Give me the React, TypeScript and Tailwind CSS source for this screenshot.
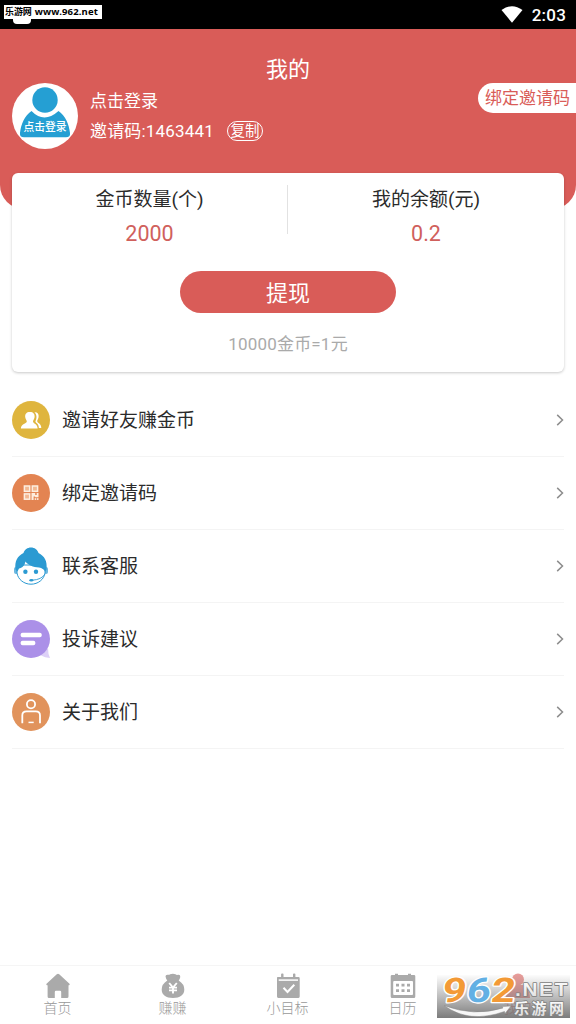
import type { ReactNode } from "react";

const AvatarIcon = () => (
  <svg viewBox="0 0 66 66" className="block size-[66px]">
    <circle cx="33" cy="33" r="33" fill="#fff" />
    <circle cx="33" cy="17" r="12.7" fill="#259fd3" />
    <path d="M19.5 28 Q32 41 46.5 28 C53.5 33 57 41 58 50 Q58.5 54.3 54 54.3 H12 Q7.500 54.3 8 50 C9 41 12.500 33 19.5 28Z" fill="#259fd3" />
  </svg>
);

const FriendsIcon = () => (
  <svg viewBox="0 0 38 38" className="size-[38px] shrink-0">
    <circle cx="19" cy="19" r="19" fill="#dfb53e" />
    <path d="M22.500 11.200 C25.500 11 27 13 26.600 16 C26.400 18 25.200 19 25.200 20.200 C25.200 22 29.300 22.300 29.300 27 H26.900 C26.900 22.500 23.400 22 23.400 20.300 C25 17.500 25 13.500 22.500 11.200Z" fill="#fff" />
    <path d="M17.900 11 C21.400 11 22.800 13 22.600 16 C22.500 18 21 19 21 20.500 C21 22.700 25.600 22.600 25.600 27.500 H8.900 C8.900 22.600 14.800 22.700 14.800 20.500 C14.800 19 13.300 18 13.200 16 C13 13 14.400 11 17.900 11Z" fill="#fff" />
  </svg>
);

const CodeIcon = () => (
  <svg viewBox="0 0 38 38" className="size-[38px] shrink-0">
    <circle cx="19" cy="19" r="19" fill="#e38452" />
    <g fill="#f2b892" stroke="#fdeee0" strokeWidth="1.500">
      <rect x="12.400" y="12" width="5.300" height="5.300" />
      <rect x="20.300" y="12" width="5.300" height="5.300" />
      <rect x="12.400" y="19.900" width="5.300" height="5.300" />
    </g>
    <g fill="#fdeee0">
      <path d="M19.500 19.100h3.700v1.800h1.500v-1.800h1.800v4.200h-3.400v-.8h-1.500v3.500h-2.100z" />
      <rect x="22.700" y="24.200" width="1.600" height="1.700" />
      <rect x="25" y="24.200" width="1.500" height="1.700" />
    </g>
  </svg>
);

const SupportIcon = () => (
  <svg viewBox="0 0 38 38" className="size-[38px] shrink-0">
    <rect x="2" y="20" width="4" height="7" rx="2" fill="#6cb8e0" />
    <rect x="32" y="20" width="4" height="7" rx="2" fill="#6cb8e0" />
    <path d="M5 18 V26 C6 32.500 12 37.200 19 37.200 S32 32.500 33 26 V18 Z" fill="#fff" stroke="#2b9ad2" strokeWidth="1" />
    <path d="M3.500 22.500 C2.500 14 5.500 9 11.500 6 C12.500 2.500 15.500 .4 19 .4 S25.500 2.500 26.500 6 C32.500 9 35.500 14 34.500 22.500 L33 24.500 C32 22.500 30 21 27 20.500 C21 20 16.500 18.500 13.500 14.500 C12.500 19 10 21 7 21.500 L5.500 24.500Z" fill="#2b9ad2" />
    <circle cx="13.400" cy="24.800" r="2.200" fill="#2b9ad2" />
    <circle cx="24" cy="24.800" r="2.200" fill="#2b9ad2" />
    <path d="M33 27 Q29.500 32.800 20 33.200" fill="none" stroke="#2b9ad2" strokeWidth=".9" />
    <ellipse cx="19.300" cy="33.200" rx="2" ry="1.200" fill="#2b9ad2" />
  </svg>
);

const FeedbackIcon = () => (
  <svg viewBox="0 0 38 38" className="size-[38px] shrink-0">
    <path d="M36 28 Q36 34 38 38 Q33 37.500 29 35.500Z" fill="#ddd0f7" />
    <circle cx="19" cy="19" r="19" fill="#ab90e8" />
    <rect x="8.700" y="12.700" width="21" height="4.600" rx="1.800" fill="#fff" />
    <rect x="8.700" y="20.700" width="14.600" height="4.600" rx="1.800" fill="#fff" />
  </svg>
);

const AboutIcon = () => (
  <svg viewBox="0 0 38 38" className="size-[38px] shrink-0">
    <circle cx="19" cy="19" r="19" fill="#e1935c" />
    <g fill="none" stroke="#fff" strokeWidth="1.800">
      <circle cx="19" cy="11.300" r="4.100" />
      <path d="M10.300 30.300 V22.500 Q10.300 18.300 14.500 18.300 H23.800 Q28 18.300 28 22.500 V30.300" />
      <path d="M16.500 29.400 H21.700" strokeWidth="1.500" />
    </g>
  </svg>
);

const Chevron = () => (
  <svg viewBox="0 0 8 12" className="h-3 w-2 shrink-0">
    <path d="M1.200 .9 L6.500 6 L1.200 11.100" fill="none" stroke="#8d8d8d" strokeWidth="1.500" />
  </svg>
);

const HomeIcon = () => (
  <svg viewBox="0 0 26 26" className="size-[26px]" fill="#aaa">
    <path d="M13 .7 Q13.600 .7 14.200 1.200 L24.500 10.800 Q25.200 12 24 12.200 H23.500 V23.500 Q23.500 25 22 25 H16.200 V19 Q16.200 17.700 15 17.700 H11 Q9.800 17.700 9.800 19 V25 H4 Q2.600 25 2.600 23.500 V12.200 H2 Q.8 12 1.500 10.800 L11.800 1.200 Q12.400 .7 13 .7Z" />
  </svg>
);

const MoneyIcon = () => (
  <svg viewBox="0 0 26 26" className="size-[26px]">
    <path d="M5.500 3.500 Q5.500 1.500 8 1.800 Q9.500 2 10 1.300 Q13 .2 15.500 1.300 Q16.500 2.200 18 1.800 Q20.500 1.500 20.300 4 Q19.800 6 18.700 7.500 Q24.300 11 24.300 16.500 C24.300 22 20 25 13 25 S1.700 22 1.700 16.500 Q1.700 11 7.300 7.500 Q6 6 5.500 3.500Z" fill="#aaa" />
    <path d="M9.200 10 L13 14.500 L16.800 10 M9 14.600 H17 M9 17.400 H17 M13 14.500 V20.500" fill="none" stroke="#fff" strokeWidth="1.900" />
  </svg>
);

const GoalIcon = () => (
  <svg viewBox="0 0 26 26" className="size-[26px]">
    <path d="M2.500 4 H6.100 V1.300 Q6.100 .5 7 .5 H7.700 Q8.500 .5 8.500 1.300 V4 H18 V1.300 Q18 .5 18.900 .5 H19.500 Q20.400 .5 20.400 1.300 V4 H23.500 Q24.700 4 24.700 5.300 V23.600 Q24.700 25 23.500 25 H3.300 Q2 25 2 23.600 V5.300 Q2 4 2.500 4Z" fill="#aaa" />
    <path d="M3.700 7.100 H23" stroke="#fff" strokeWidth="1.500" />
    <path d="M8.500 14.800 L12.500 19 L19.300 11.700" fill="none" stroke="#fff" strokeWidth="2" />
  </svg>
);

const CalendarIcon = () => (
  <svg viewBox="0 0 26 26" className="size-[26px]">
    <path d="M2 2 H5 V.8 H8 V2 H18 V.8 H21 V2 H24 Q25.300 2 25.300 3.300 V23.500 Q25.300 25 24 25 H2 Q.7 25 .7 23.500 V3.300 Q.7 2 2 2Z" fill="#aaa" />
    <rect x="3.200" y="8" width="19.800" height="14" rx="1" fill="#fff" />
    <path d="M6 12.200 H9 M11.500 12.200 H14.500 M17 12.200 H20 M6 17.700 H9 M11.500 17.700 H14.500 M17 17.700 H20" stroke="#aaa" strokeWidth="2.700" />
  </svg>
);

const MineIcon = () => (
  <svg viewBox="0 0 26 26" className="size-[26px]" fill="#d95c58">
    <circle cx="13" cy="6.500" r="6" />
    <path d="M7.500 12 H18.500 Q25 17 25 25 H1 Q1 17 7.500 12Z" />
  </svg>
);

const Watermark = () => (
  <svg
    viewBox="0 0 133 43"
    className="absolute right-[6px] bottom-[6px] h-[43px] w-[133px] overflow-visible"
    fontFamily="'Liberation Sans', 'Noto Sans CJK SC', sans-serif"
  >
    <defs>
      <linearGradient id="plate" x1="0" y1="0" x2="0" y2="1">
        <stop offset="0" stopColor="#777" stopOpacity=".02" />
        <stop offset="1" stopColor="#707070" stopOpacity=".92" />
      </linearGradient>
      <linearGradient id="silver" x1="0" y1="0" x2="0" y2="1">
        <stop offset="0" stopColor="#fff" />
        <stop offset="1" stopColor="#ddd" />
      </linearGradient>
    </defs>
    <rect width="133" height="43" fill="url(#plate)" />
    <path d="M7 30.500 Q37 42 66 33 L65 31.500 L74 31 L68 38.500 L67.500 36.500 Q32 49 7 30.500Z" fill="#f7f7f7" stroke="#888" strokeWidth=".5" />
    <g fill="url(#silver)" stroke="#808080" strokeWidth="1.600" paintOrder="stroke" strokeLinejoin="round" fontWeight="bold">
      <text x="78" y="21.300" fontSize="19" letterSpacing="1.500" textLength="54" lengthAdjust="spacingAndGlyphs">.NET</text>
      <text x="77" y="38.500" fontSize="15" textLength="50" lengthAdjust="spacing">乐游网</text>
    </g>
    <g fontFamily="Roboto, sans-serif" fontSize="34" fontWeight="bold" stroke="#fff" strokeWidth="2.600" paintOrder="stroke" strokeLinejoin="round" transform="translate(0 27) skewX(-8)">
      <text x="4" y="0" fill="#f39a36" textLength="24" lengthAdjust="spacingAndGlyphs">9</text>
      <text x="28.500" y="0" fill="#62b0e4" textLength="24" lengthAdjust="spacingAndGlyphs">6</text>
      <text x="53" y="0" fill="#f39a36" textLength="24" lengthAdjust="spacingAndGlyphs">2</text>
    </g>
  </svg>
);

const menu: { icon: ReactNode; label: string }[] = [
  { icon: <FriendsIcon />, label: "邀请好友赚金币" },
  { icon: <CodeIcon />, label: "绑定邀请码" },
  { icon: <SupportIcon />, label: "联系客服" },
  { icon: <FeedbackIcon />, label: "投诉建议" },
  { icon: <AboutIcon />, label: "关于我们" },
];

const tabs: { icon: ReactNode; label: string; active?: boolean }[] = [
  { icon: <HomeIcon />, label: "首页" },
  { icon: <MoneyIcon />, label: "赚赚" },
  { icon: <GoalIcon />, label: "小目标" },
  { icon: <CalendarIcon />, label: "日历" },
  { icon: <MineIcon />, label: "我的", active: true },
];

function Stat({ label, value }: { label: string; value: string }) {
  return (
    <div className="flex flex-1 flex-col items-center pt-[13px]">
      <div className="text-[19px] leading-7 text-[#2b2b2b]">{label}</div>
      <div className="mt-[6px] text-[21.500px] leading-7 text-[#d0605c]">{value}</div>
    </div>
  );
}

function AvatarLogin() {
  return (
    <div className="relative size-[66px]">
      <AvatarIcon />
      <span className="absolute inset-x-0 top-[38px] text-center text-[10.800px] leading-[14px] font-medium">点击登录</span>
    </div>
  );
}

export default function App() {
  return (
    <div className="relative flex h-[1024px] w-[576px] flex-col overflow-hidden bg-white font-[Roboto,'Noto_Sans_CJK_SC',sans-serif]">
      <div className="relative flex h-[29px] shrink-0 items-center justify-end gap-[9px] bg-black pr-[10px] text-white">
        <div className="absolute top-[14px] left-[13px] h-[10px] w-[18px] rounded-sm bg-white" />
        <div className="absolute top-[5px] left-1 flex h-[14px] w-[98px] items-center gap-[3px] bg-white pt-px pl-px font-['DejaVu_Sans','Noto_Sans_CJK_SC',sans-serif] text-[9px] font-bold whitespace-nowrap text-black">
          <span className="tracking-[-0.100px]">乐游网</span>
          <span className="font-['Noto_Sans',sans-serif] text-[9.500px] tracking-[0.150px]">www.962.net</span>
        </div>
        <svg viewBox="0 0 22 17" className="h-[17px] w-[22px]">
          <path d="M.5 4 Q11 -3.600 21.500 4 L11 16.800Z" fill="#fff" />
        </svg>
        <span className="pt-[2px] text-[17px] leading-none font-medium tracking-[0.200px]">2:03</span>
      </div>

      <header className="h-[180px] shrink-0 rounded-b-[24px] bg-[#d95c58] text-white">
        <h1 className="pt-[25px] text-center text-[22px] leading-8">我的</h1>
        <div className="mt-[-3px] flex items-start pl-3">
          <AvatarLogin />
          <div className="ml-3 pt-1 text-[17px] leading-7">
            <div>点击登录</div>
            <div className="mt-[2px] flex items-center">
              <span className="w-[137px] tracking-[0.180px]">邀请码:1463441</span>
              <button className="h-5 w-9 rounded-full border border-white text-center text-[14.500px] leading-[20px]">复制</button>
            </div>
          </div>
          <button className="ml-auto h-[30px] w-[98px] rounded-l-full bg-white pl-[7px] text-left text-[17px] leading-[31px] text-[#d95c58]">绑定邀请码</button>
        </div>
      </header>

      <section className="z-10 mx-3 mt-[-36px] flex h-[199px] shrink-0 flex-col items-center rounded-md bg-white shadow-[0_1px_3px_rgba(0,0,0,0.22)]">
        <div className="flex w-full">
          <div className="flex w-[275px]">
            <Stat label="金币数量(个)" value="2000" />
          </div>
          <div className="mt-3 h-[49px] w-px bg-[#e2e2e2]" />
          <Stat label="我的余额(元)" value="0.2" />
        </div>
        <button className="mt-[23px] h-[42px] w-[216px] rounded-full bg-[#d95c58] text-[22px] leading-[46px] text-white">提现</button>
        <div className="mt-[19px] text-[17px] leading-6 tracking-[0.200px] text-[#aaa]">10000金币=1元</div>
      </section>

      <ul className="mx-3 mt-3">
        {menu.map((item) => (
          <li key={item.label} className="flex h-[73px] items-center border-b border-[#f4f4f4] text-[19px] text-[#2b2b2b]">
            {item.icon}
            <span className="ml-3 flex-1 pt-[2px]">{item.label}</span>
            <Chevron />
          </li>
        ))}
      </ul>

      <nav className="mt-auto flex h-[59px] shrink-0 border-t border-[#f5f5f5] pr-px">
        {tabs.map((tab) => (
          <div key={tab.label} className={tab.active ? "flex flex-1 flex-col items-center pt-[7px] opacity-60" : "flex flex-1 flex-col items-center pt-[7px]"}>
            {tab.icon}
            <span className={tab.active ? "text-[14px] leading-[19px] text-[#d95c58]" : "text-[14px] leading-[19px] font-light text-[#999]"}>{tab.label}</span>
          </div>
        ))}
      </nav>
      <Watermark />
    </div>
  );
}
